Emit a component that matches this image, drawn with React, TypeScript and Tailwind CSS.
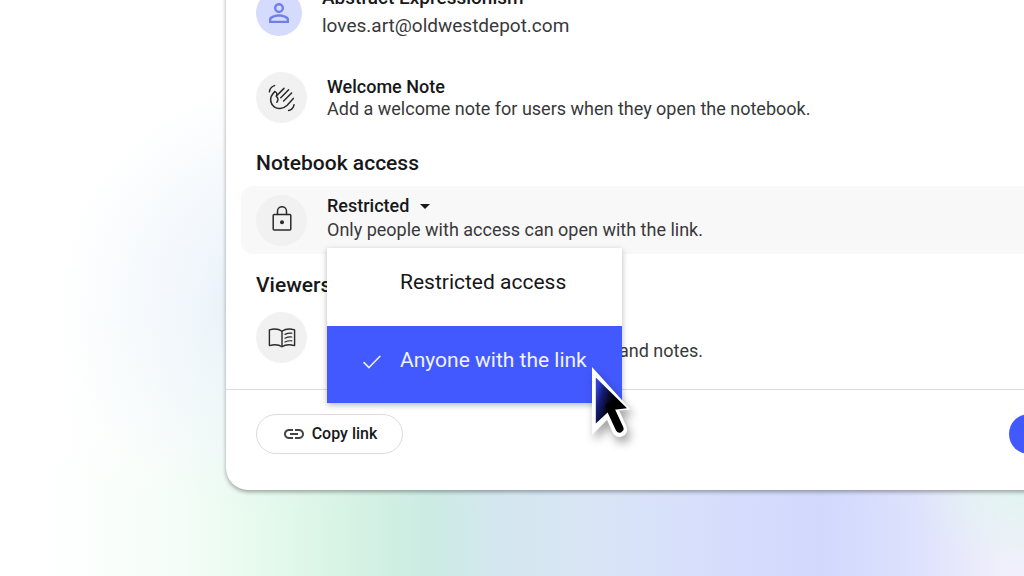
import React from "react";
import { MdArrowDropDown, MdLink, MdPersonOutline } from "react-icons/md";

function Badge({ children }: { children: React.ReactNode }) {
  return (
    <span className="flex size-[51px] shrink-0 items-center justify-center rounded-full bg-[#f1f1f1] text-[#2a2a2c]">
      {children}
    </span>
  );
}

const line = {
  fill: "none",
  stroke: "currentColor",
  strokeLinecap: "round" as const,
  strokeLinejoin: "round" as const,
};

function HandIcon() {
  return (
    <svg viewBox="16 14 28 30" width="28" height="30" aria-hidden="true" {...line} strokeWidth="1.5">
      <path d="M17.4 22.8C17.8 19.6 19.6 17.4 22.6 16.6" />
      <path d="M36.6 41.4C39.6 40.8 41.4 38.8 42 35.8" />
      <path d="M22.8 22.6C19 26 18.3 29.5 18.8 32.5C19.8 37 23.8 39.8 28.2 39.4C31 39.2 33.4 38 35.2 36.2L41.3 29.4" />
      <path d="M22.8 22.6C25 23.3 25.4 25 24.3 27.4C26.4 29 26.4 31.4 24.8 33.2" />
      <path d="M24.6 26.8L32 19.4" />
      <path d="M28.8 28.8L36.6 20.8" />
      <path d="M31.6 32L39.6 24" />
    </svg>
  );
}

function LockIcon() {
  return (
    <svg viewBox="0 0 20 28" width="20" height="28" aria-hidden="true" {...line} strokeWidth="1.5">
      <rect x="1.2" y="8.6" width="17.6" height="15.4" rx="1" />
      <path d="M5.5 8.6V5.2a4.5 4.5 0 0 1 9 0v3.4" />
      <circle cx="10" cy="16.3" r="2" fill="currentColor" stroke="none" />
    </svg>
  );
}

function BookIcon() {
  return (
    <svg viewBox="0 0 28 20" width="28" height="20" aria-hidden="true" {...line} strokeWidth="1.4">
      <path d="M14 3.2C11 1 5.5 .6 1.4 1.8V17.6C5.5 16.4 11 16.6 14 18.8C17 16.6 22.5 16.4 26.6 17.6V1.8C22.5 .6 17 1 14 3.2V18.8" />
      <path d="M17 6.4C19 5.4 21.4 5 23.8 5.2M17 10.2C19 9.2 21.4 8.8 23.8 9M17 14C19 13 21.4 12.6 23.8 12.8" strokeWidth="1.2" />
    </svg>
  );
}

function CheckIcon() {
  return (
    <svg viewBox="0 0 20 16" width="20" height="16" aria-hidden="true" {...line} strokeWidth="1.5">
      <path d="M2 9.6L7 14.6L18 3.2" />
    </svg>
  );
}

function Cursor() {
  return (
    <svg
      viewBox="0 0 44 76"
      width="44"
      height="76"
      aria-hidden="true"
      className="pointer-events-none absolute top-[119px] left-[265px] drop-shadow-[3px_6px_5px_rgba(0,0,0,0.35)]"
    >
      <defs>
        <linearGradient id="pointer" x1="0" y1="0.3" x2="0.6" y2="0.6">
          <stop offset="0" stopColor="#3040d0" />
          <stop offset="0.3" stopColor="#161d78" />
          <stop offset="0.85" stopColor="#000000" />
        </linearGradient>
      </defs>
      <path d="M17 39L27.5 62.5" stroke="#fff" strokeWidth="15" strokeLinecap="round" />
      <path d="M0 0L38.5 42.5L24 44L0 68Z" fill="#fff" />
      <path d="M3.8 10.5L35 41.2L18 43.2L3.8 56.5Z" fill="url(#pointer)" />
      <path d="M17.5 40L27.5 61.5" stroke="#000" strokeWidth="8" strokeLinecap="round" />
    </svg>
  );
}

function AccessMenu() {
  return (
    <div
      role="menu"
      className="absolute top-full left-0 z-10 mt-0.5 w-[295px] bg-white shadow-[0_2px_6px_rgba(0,0,0,0.28)]"
    >
      <button
        type="button"
        role="menuitemradio"
        aria-checked="false"
        className="flex h-[78px] w-full items-center pb-2 pl-[73px] text-[21px] text-[#161618]"
      >
        Restricted access
      </button>
      <button
        type="button"
        role="menuitemradio"
        aria-checked="true"
        className="flex h-[77px] w-full items-center gap-[18px] bg-[#4259ff] pb-2 pl-[35px] text-[21px] text-[#f0f2ff]"
      >
        <CheckIcon />
        Anyone with the link
      </button>
      <Cursor />
    </div>
  );
}

export default function App() {
  return (
    <main className="min-h-screen overflow-hidden bg-[radial-gradient(ellipse_110px_90px_at_100%_84%,#e0f5ef_0%,transparent_100%),radial-gradient(ellipse_230px_220px_at_290px_300px,#dce9f8e6_0%,#e6f0f999_40%,transparent_100%),linear-gradient(to_bottom,#ffffff_0%,#ffffff_50%,#ffffff66_76%,transparent_87%),linear-gradient(to_right,#ffffff_4%,#f4fdf7_18%,#e5faec_26%,#d6f3e4_34%,#cbebe3_42%,#d3e7ee_48%,#d9e5f6_58%,#d7defc_69%,#d2d8fd_80%,#dce1fc_89%,#f1effc_98%)] pb-[86px] font-[Roboto,sans-serif] text-[#18181a]">
      <section
        aria-label="Share notebook"
        className="-mt-5 -mr-20 ml-[226px] rounded-bl-[22px] bg-white shadow-[0_2px_4px_rgba(0,0,0,0.35)]"
      >
        <div className="px-[30px]">
          <div className="flex items-start gap-5 pt-1">
            <span className="mt-1.5 flex size-[46px] shrink-0 items-center justify-center rounded-full bg-[#d5dbfd] text-[#7180e6]">
              <MdPersonOutline size={30} />
            </span>
            <div className="text-[19px] leading-7">
              <p className="font-medium">Abstract Expressionism</p>
              <p className="text-[#38383b]">loves.art@oldwestdepot.com</p>
            </div>
          </div>

          <div className="mt-8 flex items-center gap-5">
            <Badge>
              <HandIcon />
            </Badge>
            <div className="text-[18px]">
              <h3 className="leading-[22px] font-medium">Welcome Note</h3>
              <p className="leading-[22px] text-[#38383b]">
                Add a welcome note for users when they open the notebook.
              </p>
            </div>
          </div>

          <h2 className="mt-[26px] text-[21px] leading-7 font-medium">Notebook access</h2>

          <div className="-mx-[15px] mt-[9px] flex items-center gap-5 rounded-xl bg-[#f8f8f8] px-[15px] py-2">
            <Badge>
              <LockIcon />
            </Badge>
            <div className="relative pb-1 text-[18px]">
              <button
                type="button"
                aria-haspopup="menu"
                aria-expanded="true"
                className="flex items-center gap-1 leading-6 font-medium"
              >
                Restricted
                <MdArrowDropDown size={24} />
              </button>
              <p className="leading-6 text-[#38383b]">
                Only people with access can open with the link.
              </p>
              <AccessMenu />
            </div>
          </div>

          <h2 className="mt-[17px] text-[21px] leading-7 font-medium">Viewers</h2>

          <div className="mt-[13px] flex items-center gap-5 pb-[26px]">
            <Badge>
              <BookIcon />
            </Badge>
            <p className="grow pt-[26px] pl-[292px] text-[18px] leading-6 text-[#38383b]">and notes.</p>
          </div>
        </div>

        <footer className="flex items-center justify-between border-t border-[#dcdcde] px-[30px] pt-6 pb-9">
          <button
            type="button"
            className="flex h-10 w-[147px] items-center justify-center gap-1.5 rounded-full border border-[#dfd9dd] text-[16px] font-medium"
          >
            <MdLink size={24} className="text-[#444447]" />
            Copy link
          </button>
          <button type="button" aria-label="Save" className="h-10 w-[65px] rounded-full bg-[#4259ff]" />
        </footer>
      </section>
    </main>
  );
}
